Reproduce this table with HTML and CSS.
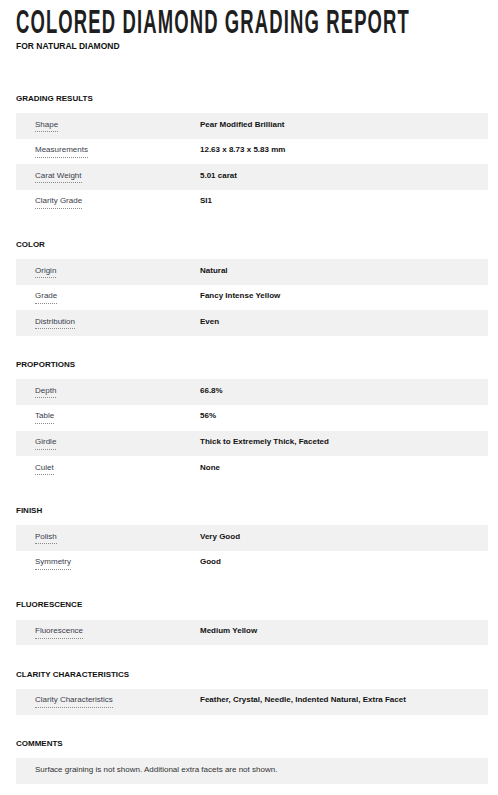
FILE: index.html
```html
<!DOCTYPE html>
<html lang="en">
<head>
<meta charset="utf-8">
<title>Colored Diamond Grading Report</title>
<link rel="stylesheet" href="styles.css">
</head>
<body>
<div class="page">
  <header class="report-head">
    <h1 class="title">COLORED DIAMOND GRADING REPORT</h1>
    <p class="subtitle">FOR NATURAL DIAMOND</p>
  </header>

  <section class="section">
    <h2 class="section-title">GRADING RESULTS</h2>
    <div class="rows">
      <div class="row"><span class="label">Shape</span><span class="value">Pear Modified Brilliant</span></div>
      <div class="row"><span class="label">Measurements</span><span class="value">12.63 x 8.73 x 5.83 mm</span></div>
      <div class="row"><span class="label">Carat Weight</span><span class="value">5.01 carat</span></div>
      <div class="row"><span class="label">Clarity Grade</span><span class="value">SI1</span></div>
    </div>
  </section>

  <section class="section">
    <h2 class="section-title">COLOR</h2>
    <div class="rows">
      <div class="row"><span class="label">Origin</span><span class="value">Natural</span></div>
      <div class="row"><span class="label">Grade</span><span class="value">Fancy Intense Yellow</span></div>
      <div class="row"><span class="label">Distribution</span><span class="value">Even</span></div>
    </div>
  </section>

  <section class="section">
    <h2 class="section-title">PROPORTIONS</h2>
    <div class="rows">
      <div class="row"><span class="label">Depth</span><span class="value">66.8%</span></div>
      <div class="row"><span class="label">Table</span><span class="value">56%</span></div>
      <div class="row"><span class="label">Girdle</span><span class="value">Thick to Extremely Thick, Faceted</span></div>
      <div class="row"><span class="label">Culet</span><span class="value">None</span></div>
    </div>
  </section>

  <section class="section">
    <h2 class="section-title">FINISH</h2>
    <div class="rows">
      <div class="row"><span class="label">Polish</span><span class="value">Very Good</span></div>
      <div class="row"><span class="label">Symmetry</span><span class="value">Good</span></div>
    </div>
  </section>

  <section class="section">
    <h2 class="section-title">FLUORESCENCE</h2>
    <div class="rows">
      <div class="row"><span class="label">Fluorescence</span><span class="value">Medium Yellow</span></div>
    </div>
  </section>

  <section class="section">
    <h2 class="section-title">CLARITY CHARACTERISTICS</h2>
    <div class="rows">
      <div class="row"><span class="label">Clarity Characteristics</span><span class="value">Feather, Crystal, Needle, Indented Natural, Extra Facet</span></div>
    </div>
  </section>

  <section class="section">
    <h2 class="section-title">COMMENTS</h2>
    <div class="rows">
      <div class="row comment"><span class="comment-text">Surface graining is not shown. Additional extra facets are not shown.</span></div>
    </div>
  </section>
</div>
</body>
</html>
```

FILE: styles.css
```css
html, body {
  margin: 0;
  padding: 0;
  background: #ffffff;
}

body {
  font-family: "Liberation Sans", Arial, sans-serif;
  color: #111;
}

.page {
  padding: 0 10px 0 16px;
}

.report-head {
  padding-top: 5px;
}

.title {
  margin: 0;
  font-family: "Liberation Sans", Arial, sans-serif;
  font-weight: 700;
  font-size: 33px;
  line-height: 33px;
  letter-spacing: 2px;
  color: #1e1e1e;
  white-space: nowrap;
  width: max-content;
  transform: scaleX(0.56);
  transform-origin: left top;
}

.subtitle {
  margin: 3px 0 0;
  font-size: 8.5px;
  line-height: 10px;
  font-weight: 700;
  color: #111;
}

.section {
  margin-top: 42.8px;
}

.section + .section {
  margin-top: 24.1px;
}

.section-title {
  margin: 0 0 9.4px;
  font-size: 8px;
  line-height: 10px;
  font-weight: 700;
  color: #111;
}

.row {
  display: grid;
  grid-template-columns: 165px 1fr;
  align-items: start;
  box-sizing: border-box;
  height: 25.6px;
  padding: 6.5px 0 0 19px;
  font-size: 8px;
  line-height: 10px;
}

.row:nth-child(odd) {
  background: #f1f1f1;
}

.label {
  justify-self: start;
  color: #3a3d4c;
  padding-bottom: 1.5px;
  border-bottom: 1px dotted #8a8a8a;
}

.value {
  font-weight: 700;
  color: #111;
}

.comment {
  display: block;
}

.comment-text {
  color: #333;
}
```
